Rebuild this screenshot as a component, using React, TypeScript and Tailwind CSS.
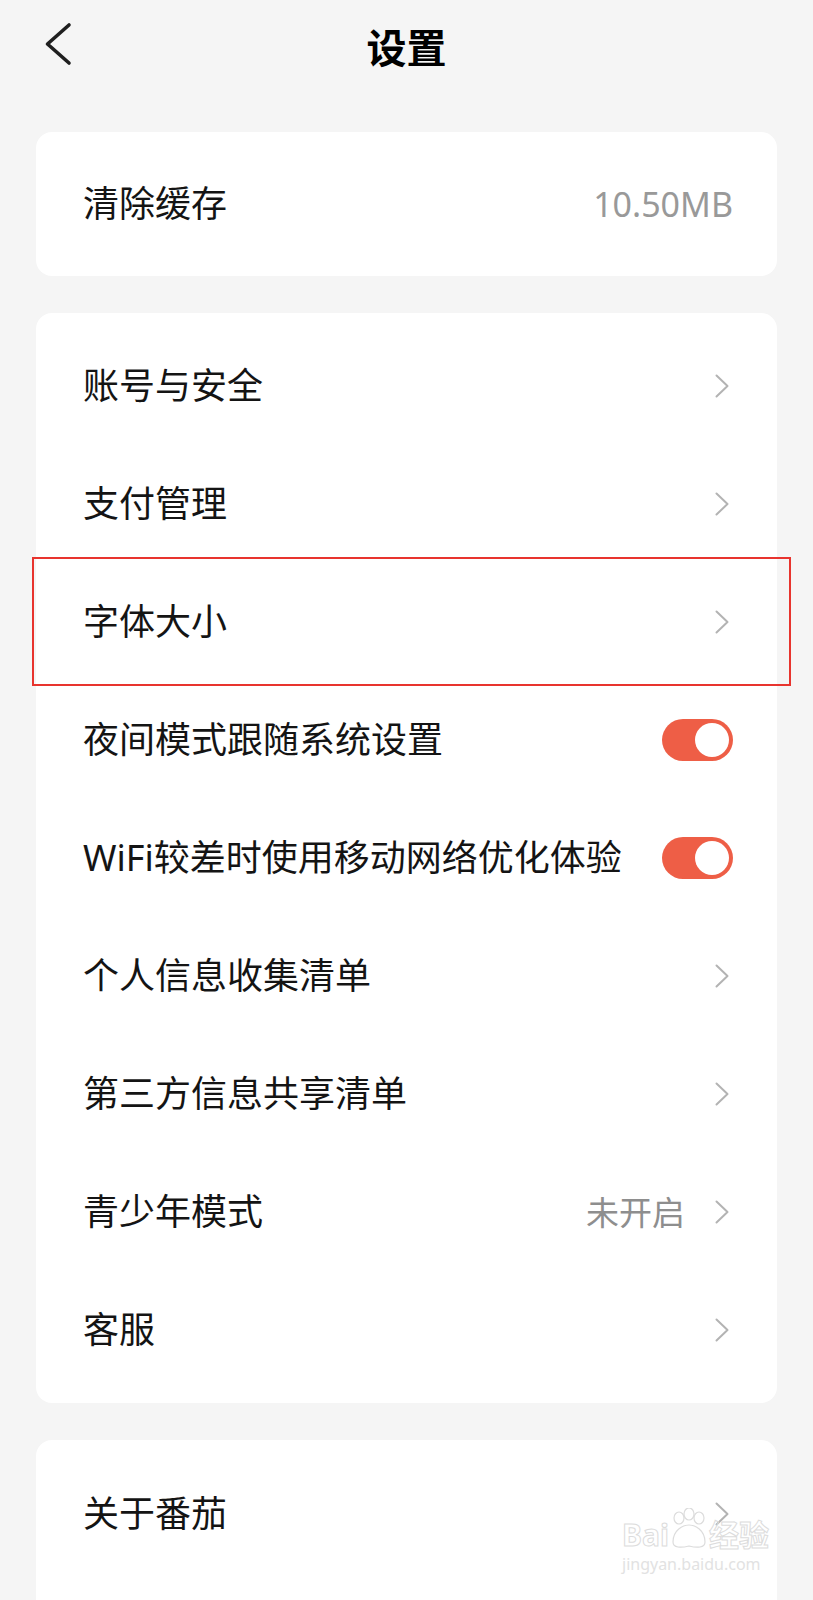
import React from "react";

type Row = {
  label: string;
  value?: string;
  toggle?: boolean;
};

const mainRows: Row[] = [
  { label: "账号与安全" },
  { label: "支付管理" },
  { label: "字体大小" },
  { label: "夜间模式跟随系统设置", toggle: true },
  { label: "WiFi较差时使用移动网络优化体验", toggle: true },
  { label: "个人信息收集清单" },
  { label: "第三方信息共享清单" },
  { label: "青少年模式", value: "未开启" },
  { label: "客服" },
];

function Chevron() {
  return (
    <svg width="18" height="24" viewBox="0 0 18 24" fill="none" className="shrink-0">
      <path d="M1.5 1.5 L12.5 12 L1.5 22.5" stroke="#b3b3b3" strokeWidth="2" strokeLinecap="round" strokeLinejoin="round" />
    </svg>
  );
}

function Toggle() {
  return (
    <div className="flex h-[42px] w-[71px] items-center justify-end rounded-full bg-[#ee5e46] pr-[4px]">
      <div className="h-[34px] w-[34px] rounded-full bg-white" />
    </div>
  );
}

function SettingRow({ row }: { row: Row }) {
  return (
    <div className="flex h-[118px] items-center justify-between pl-[47px] pr-[44px]">
      <span className="text-[36px] leading-none text-[#141414]">{row.label}</span>
      {row.toggle ? (
        <Toggle />
      ) : (
        <div className="flex items-center gap-[30px]">
          {row.value && <span className="text-[33px] leading-none text-[#8e8e8e]">{row.value}</span>}
          <Chevron />
        </div>
      )}
    </div>
  );
}

export default function App() {
  return (
    <div
      className="relative min-h-[1600px] w-[813px] overflow-hidden bg-[#f5f5f5]"
      style={{ fontFamily: '"Noto Sans", "Noto Sans CJK SC", sans-serif' }}
    >
      {/* 顶部导航 */}
      <header className="relative flex h-[96px] items-center justify-center">
        <button className="absolute left-[40px] top-[20px]">
          <svg width="36" height="48" viewBox="0 0 36 48" fill="none">
            <path d="M29 5 L7.5 24 L29 43" stroke="#1f1f1f" strokeWidth="3.6" strokeLinecap="round" strokeLinejoin="round" />
          </svg>
        </button>
        <h1 className="text-[40px] font-bold leading-none text-black">设置</h1>
      </header>

      <div className="flex flex-col gap-[37px] px-[36px] pt-[36px]">
        <div className="flex h-[144px] items-center justify-between rounded-[16px] bg-white pl-[47px] pr-[44px]">
          <span className="text-[36px] leading-none text-[#141414]">清除缓存</span>
          <span className="text-[34px] leading-none text-[#999999]">10.50MB</span>
        </div>

        <div className="rounded-[16px] bg-white py-[14px]">
          {mainRows.map((row) => (
            <SettingRow key={row.label} row={row} />
          ))}
        </div>

        <div className="rounded-[16px] bg-white pb-[60px] pt-[15px]">
          <SettingRow row={{ label: "关于番茄" }} />
        </div>
      </div>

      {/* 标注框 */}
      <div className="pointer-events-none absolute left-[32px] top-[557px] h-[129px] w-[759px] border-2 border-[#e8342e]" />

      {/* 水印 */}
      <div className="pointer-events-none absolute left-[622px] top-[1508px] flex flex-col items-start leading-none">
        <div className="flex items-end">
          <span className="text-[30px] font-bold text-transparent [-webkit-text-stroke:1px_#dcdcdc]">Bai</span>
          <svg width="44" height="42" viewBox="0 0 44 42" fill="none" stroke="#dcdcdc" strokeWidth="1.2" className="-mx-[2px]">
            <ellipse cx="12" cy="10" rx="5" ry="6" />
            <ellipse cx="22" cy="6" rx="5" ry="6" />
            <ellipse cx="32" cy="10" rx="5" ry="6" />
            <path d="M6 34 C6 22 16 17 22 17 C28 17 38 22 38 34 C38 40 30 40 22 38 C14 40 6 40 6 34 Z" />
          </svg>
          <span className="text-[30px] font-bold text-transparent [-webkit-text-stroke:1px_#dcdcdc]">经验</span>
        </div>
        <span className="mt-[6px] text-[16px] text-[#e2e2e2]">jingyan.baidu.com</span>
      </div>
    </div>
  );
}
